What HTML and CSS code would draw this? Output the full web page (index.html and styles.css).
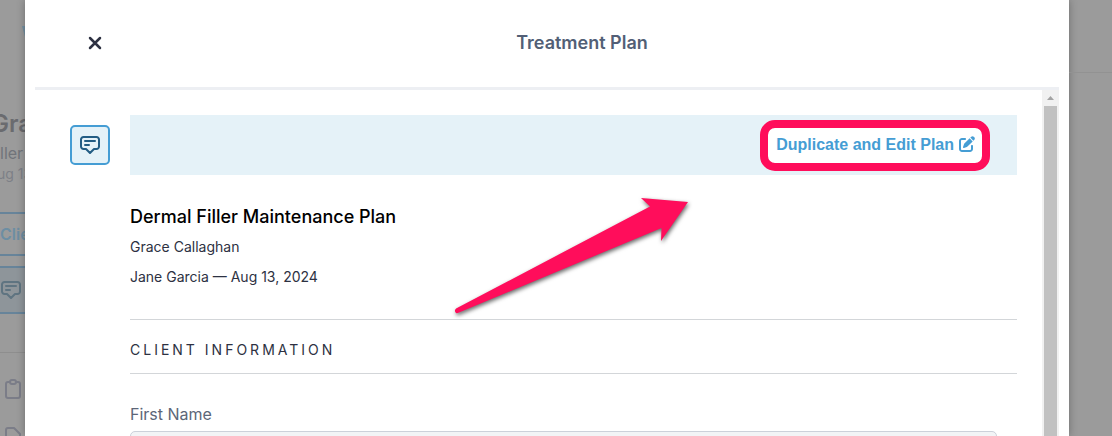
FILE: index.html
```html
<!DOCTYPE html>
<html lang="en">
<head>
<meta charset="utf-8">
<title>Treatment Plan</title>
<link rel="stylesheet" href="styles.css">
</head>
<body>
<div class="screen">
  <aside class="profile">
    <svg class="brand" width="3" height="11" viewBox="0 0 3 11"><path d="M0 0h3v11z"/></svg>
    <div class="profile-name">Gra</div>
    <div class="profile-plan">ller</div>
    <div class="profile-date">ug 13</div>
    <div class="tab">Clie</div>
    <div class="tab tab-active">
      <svg width="20" height="18" viewBox="0 0 20 18" class="line-icon"><path d="M3.500 1h13A2.500 2.500 0 0 1 19 3.500v7A2.500 2.500 0 0 1 16.500 13H14l-4 4-4-4H3.500A2.500 2.500 0 0 1 1 10.500v-7A2.500 2.500 0 0 1 3.500 1zM5 5h10M5 9H9"/></svg>
    </div>
    <div class="profile-links">
      <svg width="16" height="20" viewBox="0 0 16 20" class="line-icon"><path d="M5 3H3a2 2 0 0 0-2 2v12a2 2 0 0 0 2 2h10a2 2 0 0 0 2-2V5a2 2 0 0 0-2-2h-2M5 3a2 2 0 0 1 2-2h2a2 2 0 0 1 0 4H7a2 2 0 0 1-2-2z"/></svg>
      <svg width="16" height="20" viewBox="0 0 16 20" class="line-icon"><path d="M3 1h6l6 6v10a2 2 0 0 1-2 2H3a2 2 0 0 1-2-2V3a2 2 0 0 1 2-2z"/></svg>
    </div>
  </aside>

  <main class="modal">
    <header class="modal-header">
      <button class="close" type="button" aria-label="Close">
        <svg width="14" height="14" viewBox="0 0 14 14"><path d="M2 2l10 10M12 2L2 12"/></svg>
      </button>
      <h1 class="modal-title">Treatment Plan</h1>
    </header>
    <div class="scroller">
      <div class="plan">
        <button class="note" type="button" aria-label="Notes">
          <svg width="20" height="18" viewBox="0 0 20 18" class="line-icon"><path d="M3.500 1h13A2.500 2.500 0 0 1 19 3.500v7A2.500 2.500 0 0 1 16.500 13H14l-4 4-4-4H3.500A2.500 2.500 0 0 1 1 10.500v-7A2.500 2.500 0 0 1 3.500 1zM5 5h10M5 9H9"/></svg>
        </button>
        <div class="content">
          <div class="banner">
            <button class="duplicate" type="button">Duplicate and Edit Plan
              <svg width="16" height="16" viewBox="0 0 512 512"><path d="M471.600 21.700c-21.900-21.900-57.300-21.900-79.200 0L362.300 51.700l97.900 97.900 30.100-30.100c21.900-21.900 21.900-57.300 0-79.200L471.600 21.700zm-299.200 220c-6.100 6.100-10.800 13.600-13.500 21.900l-29.600 88.800c-2.900 8.600-.6 18.100 5.800 24.600s15.900 8.700 24.600 5.800l88.800-29.600c8.200-2.700 15.700-7.400 21.900-13.500L437.700 172.300 339.700 74.300 172.400 241.700zM96 64C43 64 0 107 0 160V416c0 53 43 96 96 96H352c53 0 96-43 96-96V320c0-17.700-14.300-32-32-32s-32 14.300-32 32v96c0 17.700-14.300 32-32 32H96c-17.700 0-32-14.300-32-32V160c0-17.700 14.300-32 32-32h96c17.700 0 32-14.300 32-32s-14.300-32-32-32H96z"/></svg>
            </button>
          </div>
          <section class="summary">
            <h2 class="plan-name">Dermal Filler Maintenance Plan</h2>
            <p class="meta">Grace Callaghan</p>
            <p class="meta">Jane Garcia — Aug 13, 2024</p>
          </section>
          <h3 class="section-title">CLIENT INFORMATION</h3>
          <div class="field">
            <label for="first-name">First Name</label>
            <input id="first-name" type="text">
          </div>
        </div>
      </div>
      <div class="scrollbar">
        <svg class="scroll-up" width="7" height="4" viewBox="0 0 7 4"><path d="M0 4L3.500 0 7 4z"/></svg>
        <div class="thumb"></div>
      </div>
    </div>
  </main>
  <div class="page-edge"></div>

  <svg class="arrow" width="250" height="130" viewBox="0 0 250 130"><path d="M11 123C9 121 10 119 12 118L205 16.500 196 8 243 12 216 51 216.500 38 14 122.500Q12 123.500 11 123z"/></svg>
</div>
</body>
</html>
```
FILE: styles.css
```css
* {
  box-sizing: border-box;
}

body {
  margin: 0;
  font-family: Inter, "Liberation Sans", sans-serif;
  background: #9b9b9b;
  color: #2d3142;
}

h1, h2, h3, p {
  margin: 0;
}

button {
  padding: 0;
  border: 0;
  background: none;
  cursor: pointer;
}

svg {
  display: block;
  flex: none;
}

.line-icon {
  fill: none;
  stroke: currentColor;
  stroke-width: 2;
  stroke-linecap: round;
  stroke-linejoin: round;
}

.screen {
  position: relative;
  display: grid;
  grid-template-columns: 25px minmax(0, 1fr) 43px;
  height: 100vh;
  overflow: hidden;
}

/* Dimmed page behind the dialog */
.profile {
  overflow: hidden;
  white-space: nowrap;
  color: #71747a;
}

.brand {
  margin: 26px 0 70px 22px;
  fill: #7591a3;
}

.profile-name {
  margin-left: -9px;
  font-size: 24px;
  line-height: 34px;
  font-weight: 600;
  color: #6a6b6f;
}

.profile-plan {
  font-size: 16px;
  line-height: 24px;
}

.profile-date {
  margin-left: -3px;
  font-size: 14px;
  line-height: 18px;
  color: #7d8087;
}

.tab {
  display: flex;
  align-items: center;
  height: 44px;
  margin-top: 29px;
  border: solid #67849a;
  border-width: 2px 0;
  font-size: 16px;
  line-height: 20px;
  font-weight: 600;
  color: #6d8ea3;
}

.tab-active {
  height: 48px;
  margin-top: 10px;
  padding-left: 1px;
  background: #8e959a;
  color: #5f7481;
}

.profile-links {
  display: grid;
  gap: 28px;
  margin-top: 38px;
  padding: 26px 0 0 5px;
  border-top: 1px solid #8e8e8e;
  color: #7b7d88;
}

.page-edge {
  height: 73px;
  border-bottom: 1px solid #929292;
}

/* Dialog */
.modal {
  display: flex;
  flex-direction: column;
  min-width: 0;
  min-height: 0;
  padding: 0 10px;
  background: #fff;
  box-shadow: 0 0 8px rgba(0, 0, 0, 0.3);
}

.modal-header {
  display: grid;
  grid-template-columns: 50px 1fr;
  align-items: center;
  flex: none;
  padding: 26px 15px 27px 35px;
  border-bottom: 3px solid #edeff3;
}

.close {
  display: grid;
  place-items: center;
  height: 34px;
  width: 50px;
}

.close path {
  fill: none;
  stroke: #2d3142;
  stroke-width: 2.500;
  stroke-linecap: round;
}

.modal-title {
  font-size: 18px;
  line-height: 34px;
  font-weight: 600;
  text-align: center;
  color: #525f76;
}

.scroller {
  display: flex;
  flex: 1;
  min-height: 0;
  overflow: hidden;
}

.plan {
  display: flex;
  flex: 1;
  align-items: flex-start;
  gap: 20px;
  padding: 25px 25px 0 35px;
}

.note {
  display: grid;
  place-items: center;
  width: 40px;
  height: 40px;
  margin-top: 10px;
  border: 2px solid #459dd4;
  border-radius: 5px;
  background: #e5f2f8;
  color: #235d84;
}

.content {
  flex: 1;
  min-width: 0;
}

.banner {
  display: flex;
  align-items: center;
  justify-content: flex-end;
  height: 60px;
  padding-right: 27px;
  background: #e5f2f8;
}

.duplicate {
  display: flex;
  align-items: center;
  gap: 5px;
  padding: 0 7px 2px 8px;
  border: 8px solid #ff0d5b;
  border-radius: 15px;
  background: #fff;
  font: bold 16px/33px "Liberation Sans", Arial, sans-serif;
  color: #459dd4;
}

.duplicate svg {
  fill: currentColor;
}

.summary {
  padding: 27px 0 27px;
  border-bottom: 1px solid #d3d6d9;
}

.plan-name {
  font-size: 18px;
  line-height: 30px;
  font-weight: 500;
  color: #000;
}

.meta {
  font-size: 14px;
  line-height: 30px;
}

.section-title {
  border-bottom: 1px solid #d3d6d9;
  font-size: 14px;
  line-height: 20px;
  padding: 20px 0 13px;
  font-weight: 400;
  letter-spacing: 3px;
}

.field {
  padding: 30px 20px 0 0;
}

.field label {
  display: block;
  margin-bottom: 7px;
  font-size: 16px;
  line-height: 20px;
  color: #5c6678;
}

.field input {
  display: block;
  width: 100%;
  height: 40px;
  border: 1px solid #ccd1da;
  border-radius: 5px;
  background: #f2f4f6;
}

.scrollbar {
  display: flex;
  flex-direction: column;
  align-items: center;
  flex: none;
  width: 17px;
  background: #f1f1f1;
}

.scroll-up {
  margin: 6px 0;
  fill: #a3a3a3;
}

.thumb {
  flex: 1;
  width: 13px;
  background: #c1c1c1;
}

/* Callout pointing at the duplicate action */
.arrow {
  position: absolute;
  left: 445px;
  top: 190px;
  fill: #ff0d5b;
  filter: drop-shadow(1px 2px 2px rgba(0, 0, 0, 0.6));
}
```
